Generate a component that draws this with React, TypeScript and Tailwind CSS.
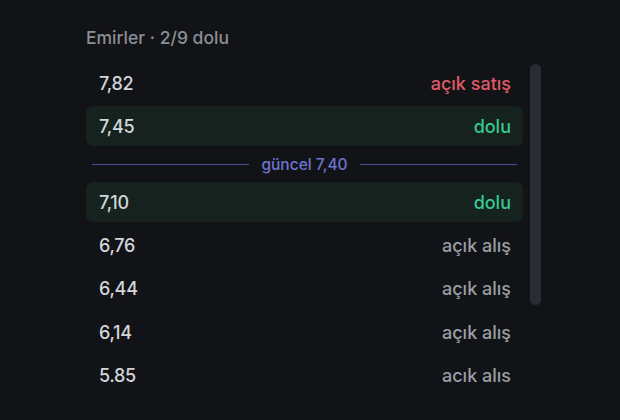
import React from "react";

type Row = { price: string; status: string; kind: "sell" | "fill" | "buy" };

const rowsTop: Row[] = [
  { price: "7,82", status: "açık satış", kind: "sell" },
  { price: "7,45", status: "dolu", kind: "fill" },
];
const rowsBottom: Row[] = [
  { price: "7,10", status: "dolu", kind: "fill" },
  { price: "6,76", status: "açık alış", kind: "buy" },
  { price: "6,44", status: "açık alış", kind: "buy" },
  { price: "6,14", status: "açık alış", kind: "buy" },
  { price: "5.85", status: "acık alıs", kind: "buy" },
];

function OrderRow({ r }: { r: Row }) {
  const bg = r.kind === "fill" ? "bg-[#15221e]" : "";
  const color =
    r.kind === "sell"
      ? "text-[#e05b68]"
      : r.kind === "fill"
      ? "text-[#38c98f]"
      : "text-[#9b9da4]";
  return (
    <div
      className={`h-[40px] shrink-0 flex items-center justify-between pl-[13px] pr-[12px] rounded-[7px] ${bg}`}
    >
      <span className="text-[18px] font-medium text-[#d3d5da] tracking-[-0.3px]">{r.price}</span>
      <span className={`text-[18px] font-medium ${color}`}>{r.status}</span>
    </div>
  );
}

export default function App() {
  return (
    <div
      className="w-[620px] h-[420px] bg-[#121317] overflow-hidden"
      style={{ fontFamily: "Inter, 'Noto Sans', sans-serif" }}
    >
      <div className="pl-[86px] pt-[28px]">
        <div className="h-[20px] leading-[20px] text-[17.5px] font-medium text-[#8c8e95]">
          Emirler · 2/9 dolu
        </div>
        <div className="mt-[15px] flex gap-[7px] h-[400px]">
          <div className="w-[437px] flex flex-col gap-[3.4px]">
            {rowsTop.map((r) => (
              <OrderRow key={r.price} r={r} />
            ))}
            <div className="h-[29px] shrink-0 flex items-center gap-[12px] pl-[6px] pr-[6px]">
              <div className="flex-1 h-[1.5px] bg-[#4b5092]" />
              <span className="text-[15.5px] font-medium text-[#6e74d0]">güncel 7,40</span>
              <div className="flex-1 h-[1.5px] bg-[#4b5092]" />
            </div>
            {rowsBottom.map((r, i) => (
              <OrderRow key={r.price + i} r={r} />
            ))}
          </div>
          <div className="w-[11px]">
            <div className="mt-[1px] h-[241px] w-full rounded-full bg-[#2a2c33]" />
          </div>
        </div>
      </div>
    </div>
  );
}
